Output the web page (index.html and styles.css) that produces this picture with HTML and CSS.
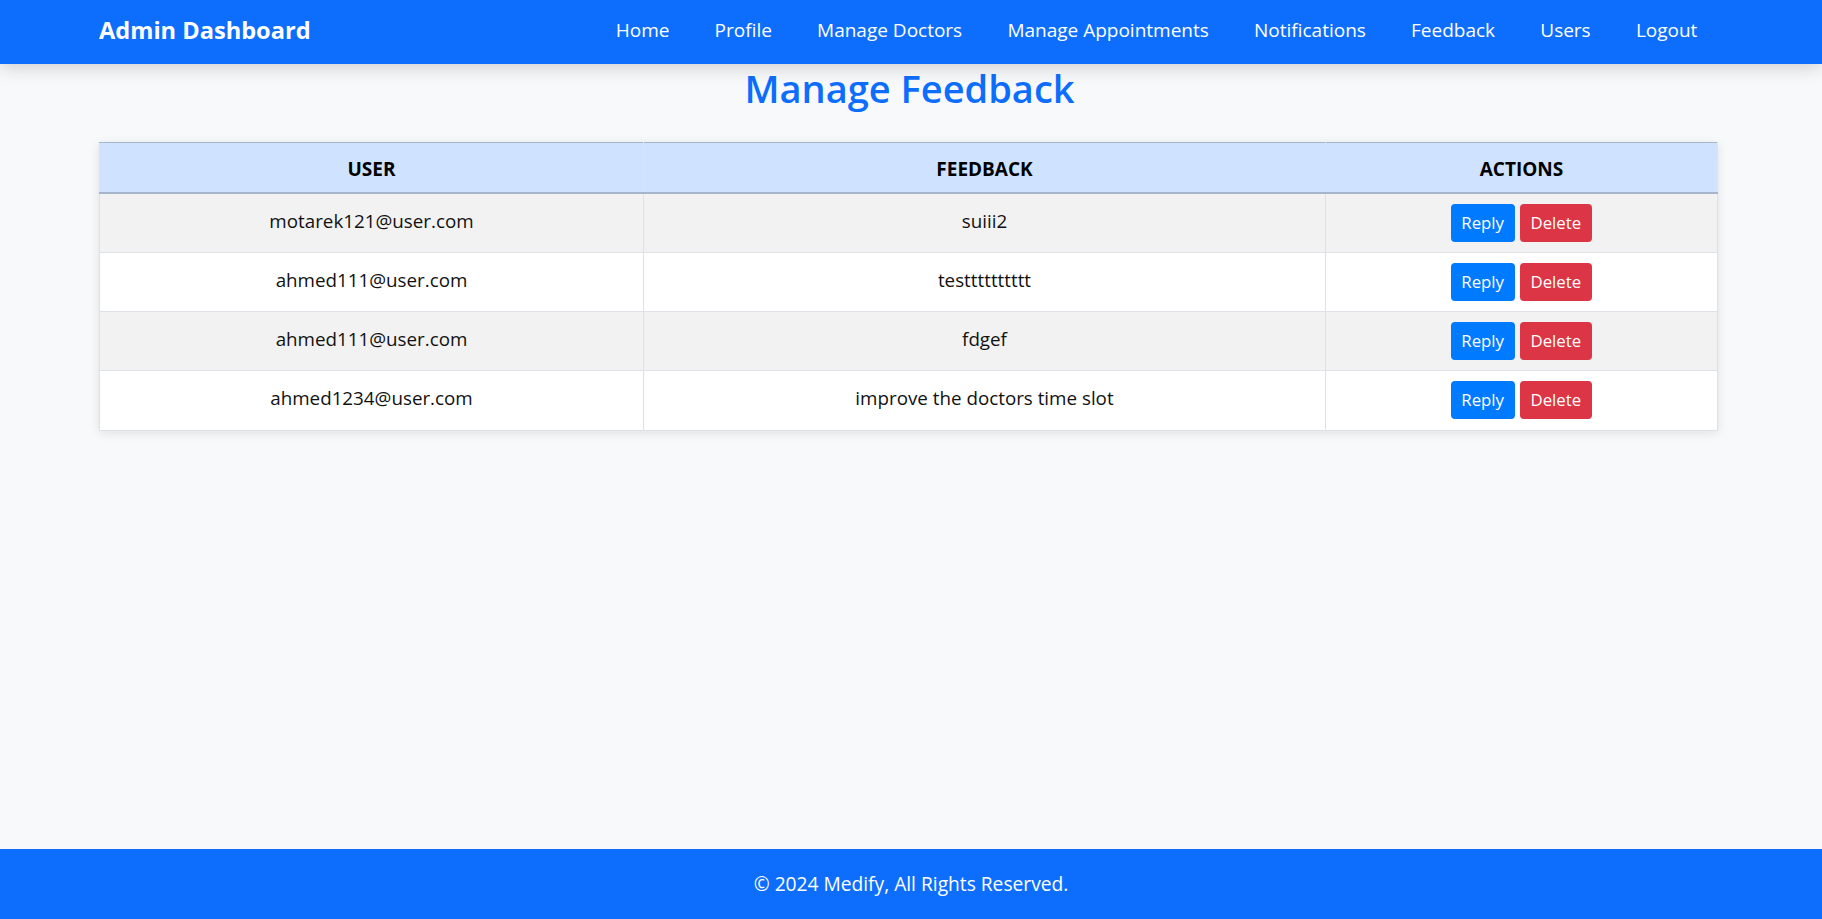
FILE: index.html
```html
<!DOCTYPE html>
<html lang="en">
<head>
<meta charset="utf-8">
<title>Manage Feedback</title>
<link rel="stylesheet" href="styles.css">
</head>
<body>
<header class="navbar">
  <a class="brand" href="#">Admin Dashboard</a>
  <nav class="nav-links">
    <a href="#">Home</a>
    <a href="#">Profile</a>
    <a href="#">Manage Doctors</a>
    <a href="#">Manage Appointments</a>
    <a href="#">Notifications</a>
    <a href="#">Feedback</a>
    <a href="#">Users</a>
    <a href="#">Logout</a>
  </nav>
</header>
<main class="content">
  <h1 class="page-title">Manage Feedback</h1>
  <table class="feedback-table">
    <colgroup>
      <col class="col-user">
      <col class="col-feedback">
      <col class="col-actions">
    </colgroup>
    <thead>
      <tr><th>User</th><th>Feedback</th><th>Actions</th></tr>
    </thead>
    <tbody>
      <tr>
        <td>motarek121@user.com</td>
        <td>suiii2</td>
        <td><div class="actions"><button class="btn btn-reply">Reply</button><button class="btn btn-delete">Delete</button></div></td>
      </tr>
      <tr>
        <td>ahmed111@user.com</td>
        <td>testttttttttt</td>
        <td><div class="actions"><button class="btn btn-reply">Reply</button><button class="btn btn-delete">Delete</button></div></td>
      </tr>
      <tr>
        <td>ahmed111@user.com</td>
        <td>fdgef</td>
        <td><div class="actions"><button class="btn btn-reply">Reply</button><button class="btn btn-delete">Delete</button></div></td>
      </tr>
      <tr>
        <td>ahmed1234@user.com</td>
        <td>improve the doctors time slot</td>
        <td><div class="actions"><button class="btn btn-reply">Reply</button><button class="btn btn-delete">Delete</button></div></td>
      </tr>
    </tbody>
  </table>
</main>
<footer class="footer">
  <p>© 2024 Medify, All Rights Reserved.</p>
</footer>
</body>
</html>
```
FILE: styles.css
```css
* { box-sizing: border-box; }

html, body { height: 100%; }

body {
  margin: 0;
  min-height: 100vh;
  display: flex;
  flex-direction: column;
  background: #f8f9fa;
  font-family: "Open Sans", "Noto Sans", sans-serif;
  color: #111;
}

.navbar {
  position: relative;
  z-index: 2;
  height: 64px;
  flex: 0 0 64px;
  display: flex;
  align-items: center;
  justify-content: space-between;
  padding: 0 102px 4px 99px;
  background: #0d6efd;
  box-shadow: 0 3px 18px rgba(0, 0, 0, 0.18);
}

.brand {
  color: #fff;
  text-decoration: none;
  font-weight: 700;
  font-size: 23.6px;
  line-height: 32px;
}

.nav-links {
  display: flex;
  align-items: center;
}

.nav-links a {
  color: #fff;
  text-decoration: none;
  font-size: 19px;
  line-height: 28px;
  padding: 0 22.6px;
}

.content {
  flex: 1;
}

.page-title {
  margin: 2px 0 30px;
  padding-right: 3px;
  text-align: center;
  color: #0d6efd;
  font-size: 38px;
  font-weight: 600;
  line-height: 1.2;
}

.feedback-table {
  margin-left: 99px;
  width: 1619px;
  table-layout: fixed;
  border-collapse: collapse;
  background: #fff;
  box-shadow: 0 2px 10px rgba(0, 0, 0, 0.1);
  text-align: center;
}

.col-user { width: 544px; }
.col-feedback { width: 682px; }

.feedback-table th {
  background: #cfe2ff;
  color: #000;
  font-size: 19px;
  font-weight: 700;
  text-transform: uppercase;
  line-height: 26px;
  padding: 13px 8px 10px;
  border-top: 1px solid #a6b5cc;
  border-bottom: 2px solid #a6b5cc;
  border-left: 1px solid #dde3ec;
  border-right: 1px solid #dde3ec;
  vertical-align: bottom;
}

.feedback-table td {
  font-size: 18.8px;
  line-height: 34px;
  padding: 10px 8px 10.25px;
  border: 1px solid #dee2e6;
  vertical-align: top;
  color: #111;
}

.feedback-table tbody tr:nth-child(odd) td {
  background: #f2f2f2;
}

.actions {
  display: flex;
  justify-content: center;
  gap: 5px;
}

.btn {
  font-family: inherit;
  font-size: 16.8px;
  line-height: 24px;
  height: 38px;
  padding: 6px 9.5px;
  border: 1px solid transparent;
  border-radius: 4px;
  color: #fff;
  cursor: pointer;
}

.btn-reply { background: #007bff; }
.btn-delete { background: #dc3545; padding: 6px 10px; }

.footer {
  flex: 0 0 70px;
  height: 70px;
  background: #0d6efd;
  display: flex;
  align-items: center;
  justify-content: center;
}

.footer p {
  margin: 0;
  color: #fff;
  font-size: 19.2px;
  line-height: 26px;
}
```
